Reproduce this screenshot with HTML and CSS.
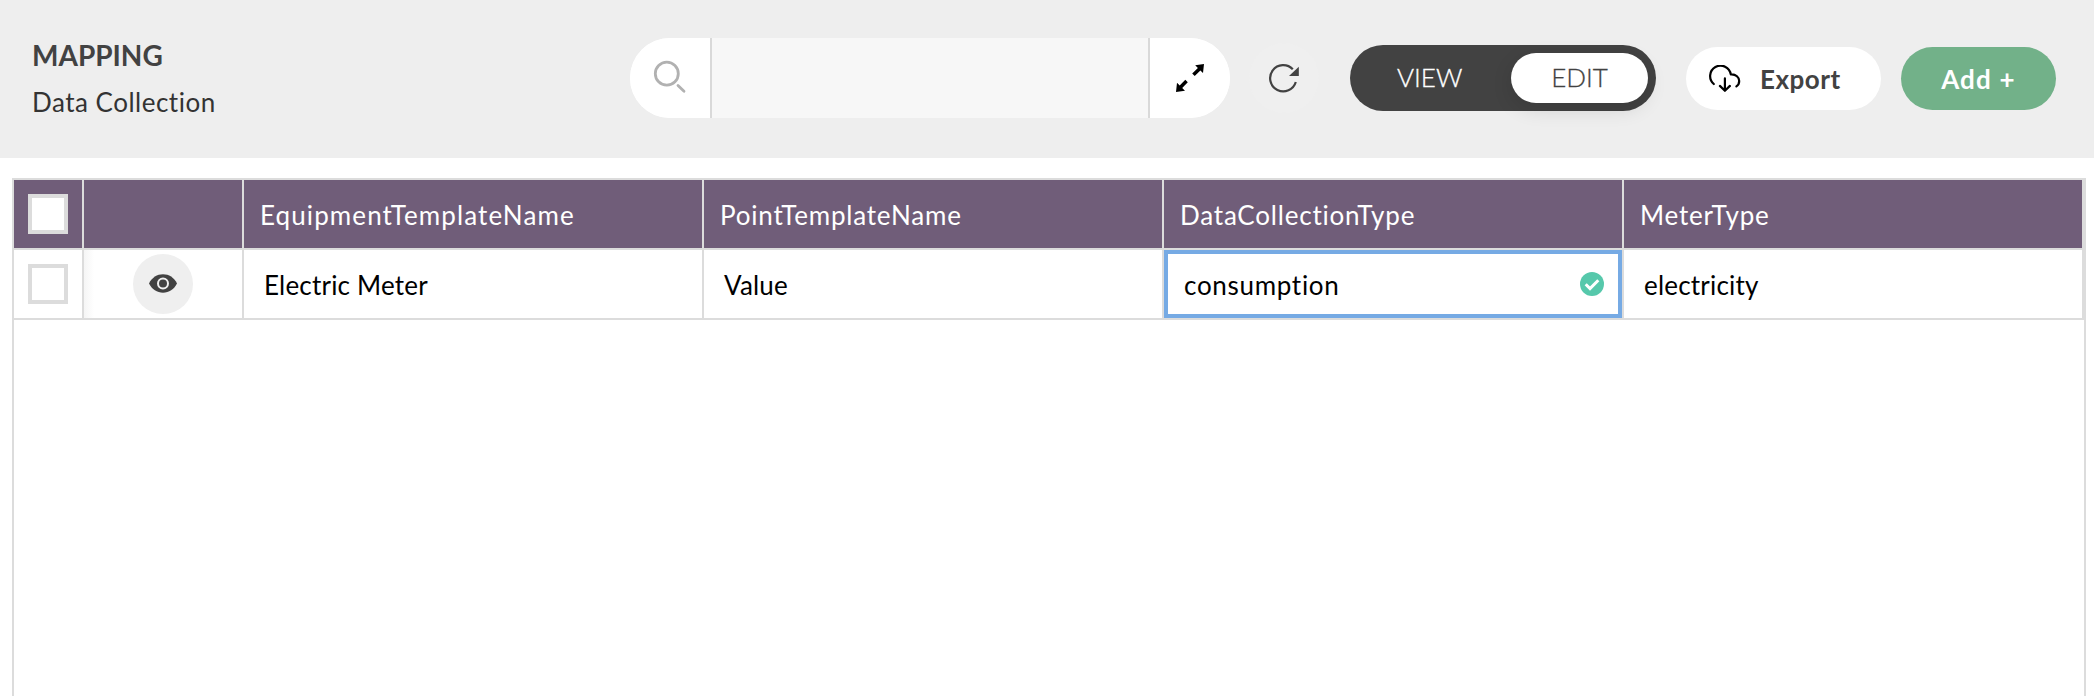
FILE: index.html
```html
<!DOCTYPE html>
<html lang="en">
<head>
<meta charset="utf-8">
<title>Mapping - Data Collection</title>
<link rel="stylesheet" href="styles.css">
</head>
<body>
<header class="topbar">
  <div class="heading">
    <h1 class="title">MAPPING</h1>
    <p class="subtitle">Data Collection</p>
  </div>
  <div class="search">
    <button class="search-btn" aria-label="Search">
      <svg width="80" height="80" viewBox="0 0 80 80" fill="none" stroke="#b1b1b1" stroke-linecap="round"><circle cx="36.8" cy="35.7" r="11.5" stroke-width="2.8"/><path d="M48 47.500l6 5.800" stroke-width="2.800"/></svg>
    </button>
    <input class="search-input" type="text" aria-label="Search text">
    <button class="expand-btn" aria-label="Expand">
      <svg width="80" height="80" viewBox="0 0 80 80"><path d="M54 26l-1 9-2.600-2.600-5.700 5.600-2.500-2.500 5.700-5.600-2.700-2.600zM26 54l1-9.200 2.700 2.600 5.600-5.600 2.500 2.500-5.600 5.600 2.800 2.800z" fill="#000"/></svg>
    </button>
  </div>
  <button class="refresh" aria-label="Refresh">
    <svg width="70" height="70" viewBox="0 0 70 70"><path d="M46.800 39A13.100 13.100 0 1 1 43.800 26.300" fill="none" stroke="#424242" stroke-width="2.200"/><path d="M49.800 23.700V33H40z" fill="#424242"/></svg>
  </button>
  <div class="toggle">
    <span class="toggle-view">VIEW</span>
    <span class="toggle-edit">EDIT</span>
  </div>
  <button class="export">
    <svg width="32" height="28" viewBox="0 0 32 28" fill="none" stroke="#000" stroke-width="2.2" stroke-linecap="round" stroke-linejoin="round"><path d="M4.800 19A10.400 10.400 0 1 1 21.800 9.400C27 9 30.200 12.500 30.200 16c0 2.300-1 4.200-2.800 5.400M15.900 13.400v12.400M10.900 20.900l5 4.900 5-4.900"/></svg>
    <span>Export</span>
  </button>
  <button class="add">Add +</button>
</header>
<main class="grid">
  <div class="row head">
    <div class="cell check"><span class="box"></span></div>
    <div class="cell action"></div>
    <div class="cell wide">EquipmentTemplateName</div>
    <div class="cell">PointTemplateName</div>
    <div class="cell">DataCollectionType</div>
    <div class="cell">MeterType</div>
  </div>
  <div class="row data">
    <div class="cell check"><span class="box"></span></div>
    <div class="cell action">
      <span class="eye"><svg width="28" height="20" viewBox="0 0 28 20"><path d="M0 9.500C3 3.500 8 .3 14 .3s11 3.200 14 9.200c-3 6-8 9.200-14 9.200S3 15.500 0 9.500z" fill="#424242"/><circle cx="14" cy="9.500" r="5" fill="#424242" stroke="#efefef" stroke-width="2"/></svg></span>
    </div>
    <div class="cell">Electric Meter</div>
    <div class="cell">Value</div>
    <div class="cell selected wide"><span class="value">consumption</span>
      <svg width="24" height="24" viewBox="0 0 24 24"><circle cx="12" cy="12" r="12" fill="#56c8ab"/><path d="M5.700 12.300l4.300 4.300 8.300-8.300" fill="none" stroke="#fff" stroke-width="3"/></svg>
    </div>
    <div class="cell">electricity</div>
  </div>
</main>
</body>
</html>
```
FILE: styles.css
```css
* { box-sizing: border-box; }
body {
  margin: 0;
  height: 696px;
  display: flex;
  flex-direction: column;
  overflow: hidden;
  background: #fff;
  font-family: Lato, sans-serif;
  font-size: 26px;
  font-variant-ligatures: none;
  color: #424242;
}
button { border: 0; padding: 0; font: inherit; color: inherit; }
svg { display: block; flex: none; }
.topbar {
  flex: none;
  height: 158px;
  padding: 0 38px 0 32px;
  display: flex;
  align-items: flex-start;
  background: #eee;
}
.heading { width: 598px; padding-top: 35px; }
.title { margin: 0; font-size: 28px; line-height: 40px; font-weight: 700; }
.subtitle { margin: 7px 0 0; line-height: 40px; color: #333; letter-spacing: .5px; }
.search {
  width: 600px;
  height: 80px;
  margin-top: 38px;
  display: flex;
  overflow: hidden;
  border-radius: 40px;
  background: #fff;
}
.search-btn, .expand-btn { flex: none; width: 80px; background: #fff; }
.search-input {
  flex: 1;
  min-width: 0;
  border: solid #d9d9d9;
  border-width: 0 2px;
  background: #f7f7f7;
}
.refresh {
  width: 70px;
  height: 70px;
  margin: 43px 0 0 19px;
  border-radius: 50%;
  background: #efefef;
}
.toggle {
  width: 306px;
  height: 66px;
  margin: 45px 0 0 31px;
  padding: 8px;
  display: flex;
  border-radius: 33px;
  background: #424242;
  color: #fff;
  font-weight: 300;
  line-height: 49px;
  -webkit-text-stroke: .3px currentColor;
}
.toggle-view { width: 153px; padding-left: 39px; }
.toggle-edit {
  width: 137px;
  text-align: center;
  border-radius: 25px;
  background: #fff;
  color: #424242;
  box-shadow: 0 6px 20px rgba(0, 0, 0, .12);
}
.export, .add {
  height: 63px;
  margin-top: 47px;
  border-radius: 32px;
  font-weight: 700;
}
.export {
  width: 195px;
  margin-left: 30px;
  padding-left: 23px;
  display: flex;
  align-items: center;
  gap: 19px;
  background: #fff;
  letter-spacing: .5px;
}
.add {
  width: 155px;
  margin-left: 20px;
  background: #72b189;
  color: #fff;
  letter-spacing: 1.2px;
}
.grid {
  flex: 1;
  margin: 20px 8px 0 12px;
  border: solid #dcdcdc;
  border-width: 2px 2px 0;
}
.row {
  display: grid;
  grid-template-columns: 70px 160px repeat(4, 460px);
  height: 70px;
  border-bottom: 2px solid #dcdcdc;
}
.cell {
  padding: 1px 0 0 20px;
  display: flex;
  align-items: center;
  border-right: 2px solid #dcdcdc;
  color: #000;
  letter-spacing: .2px;
}
.cell.wide { letter-spacing: .7px; }
.head .cell {
  padding-left: 16px;
  background: #705d79;
  color: #fff;
  letter-spacing: .8px;
}
.head .cell.wide { letter-spacing: 1.1px; }
.cell.check, .head .cell.check, .cell.action { padding: 0; justify-content: center; }
.data .action { background: linear-gradient(to right, #f5f5f5, #fff 10px); }
.box { width: 40px; height: 40px; border: 4px solid #dcdcdc; background: #fff; }
.eye {
  width: 60px;
  height: 60px;
  display: flex;
  align-items: center;
  justify-content: center;
  border-radius: 50%;
  background: #efefef;
}
.cell.selected {
  padding: 0 18px 0 20px;
  justify-content: space-between;
  box-shadow: inset 0 0 0 4px #76aae4;
}
.value { padding-top: 2px; }
```
